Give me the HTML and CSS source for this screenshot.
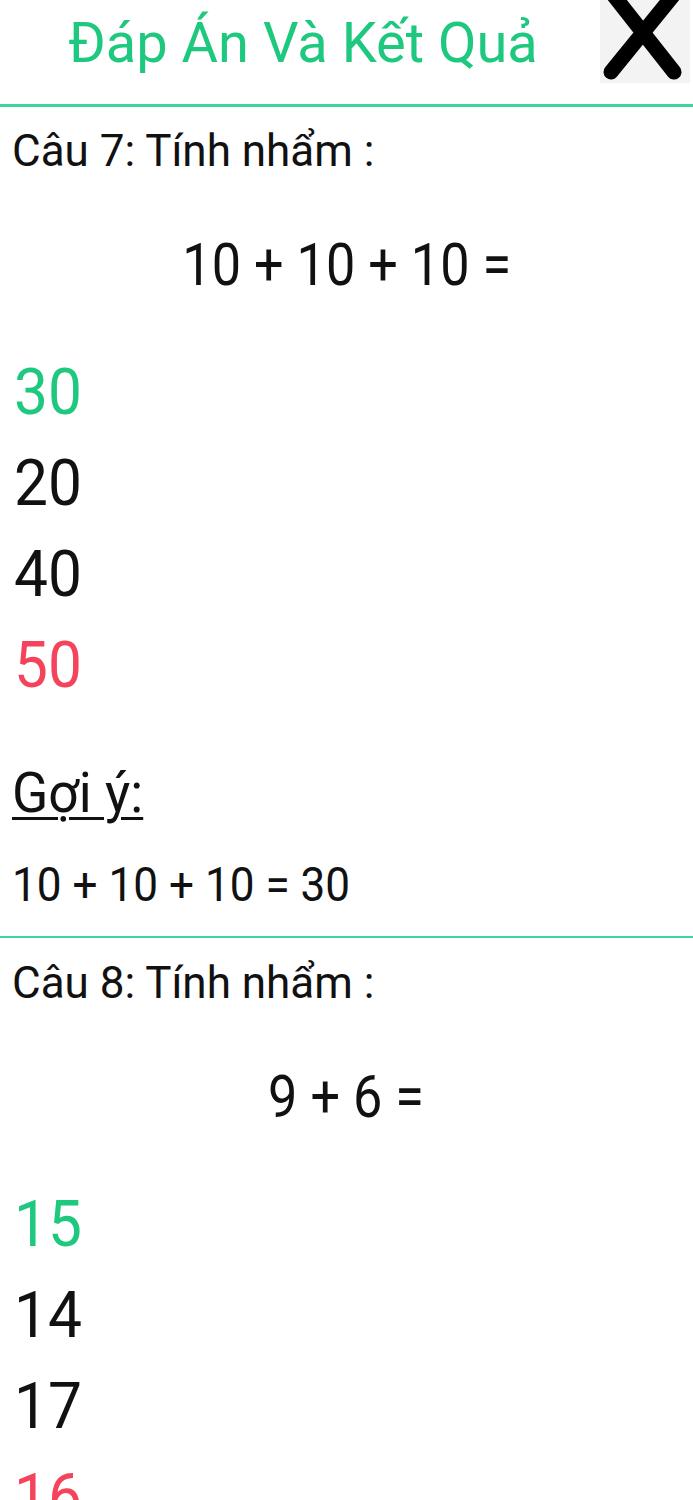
FILE: index.html
```html
<!DOCTYPE html>
<html lang="vi">
<head>
<meta charset="utf-8">
<title>Đáp Án Và Kết Quả</title>
<link rel="stylesheet" href="styles.css">
</head>
<body>
<header class="top">
  <h1 class="title">Đáp Án Và Kết Quả</h1>
  <button class="close" aria-label="Đóng">
    <svg viewBox="0 0 90 83" width="90" height="83" aria-hidden="true">
      <path d="M11 -8 L74 72 M76 -8 L11 72" stroke="#000" stroke-width="15" stroke-linecap="round" fill="none"/>
    </svg>
  </button>
</header>

<section class="q">
  <p class="q-label"><span class="sx">Câu 7: Tính nhẩm :</span></p>
  <p class="q-expr"><span class="sx">10 + 10 + 10 =</span></p>
  <ul class="answers">
    <li class="ans correct"><span class="sx">30</span></li>
    <li class="ans"><span class="sx">20</span></li>
    <li class="ans"><span class="sx">40</span></li>
    <li class="ans wrong"><span class="sx">50</span></li>
  </ul>
  <p class="hint-title"><span class="sx">Gợi ý:</span></p>
  <p class="hint"><span class="sx">10 + 10 + 10 = 30</span></p>
</section>

<section class="q">
  <p class="q-label"><span class="sx">Câu 8: Tính nhẩm :</span></p>
  <p class="q-expr"><span class="sx">9 + 6 =</span></p>
  <ul class="answers">
    <li class="ans correct"><span class="sx">15</span></li>
    <li class="ans"><span class="sx">14</span></li>
    <li class="ans"><span class="sx">17</span></li>
    <li class="ans wrong"><span class="sx">16</span></li>
  </ul>
</section>
</body>
</html>
```

FILE: styles.css
```css
* { box-sizing: border-box; }
html, body {
  margin: 0;
  padding: 0;
  background: #fff;
}
body {
  font-family: Roboto, "Noto Sans", "DejaVu Sans", sans-serif;
  color: #111;
  overflow: hidden;
}
p, h1, ul { margin: 0; padding: 0; }
ul { list-style: none; }

.top {
  display: flex;
  align-items: flex-start;
  height: 107px;
  border-bottom: 3px solid #3ed59d;
}
.title {
  flex: 1;
  text-align: center;
  font-weight: 400;
  font-size: 56px;
  line-height: 86px;
  color: #1fc87f;
  padding-left: 6px;
}
.close {
  width: 90px;
  height: 83px;
  margin-right: 3px;
  padding: 0;
  border: 0;
  background: #f3f3f3;
  display: block;
  overflow: hidden;
}
.close svg { display: block; }

.sx {
  display: inline-block;
  transform-origin: left center;
}

.q {
  border-bottom: 2px solid #3ed59d;
  padding: 0 12px;
}
.q:first-of-type { margin-top: -1px; }
.q-label {
  font-size: 44px;
  line-height: 91px;
}
.q-expr {
  font-size: 59px;
  line-height: 136px;
  text-align: center;
}
.q-expr .sx {
  transform: scaleX(0.885);
  transform-origin: center center;
}
.answers {
  padding-top: 14px;
  padding-left: 2px;
}
.ans {
  font-size: 65px;
  line-height: 91px;
}
.ans .sx { transform: scaleX(0.93); }
.ans.correct { color: #1fc87f; }
.ans.wrong { color: #f5435c; }

.hint-title {
  margin-top: 42px;
  font-size: 55px;
  line-height: 80px;
}
.hint-title .sx {
  transform: scaleX(0.97);
  text-decoration: underline;
  text-decoration-thickness: 3px;
  text-underline-offset: 5px;
}
.hint {
  font-size: 49px;
  line-height: 103px;
}
.hint .sx { transform: scaleX(0.9); }
```
